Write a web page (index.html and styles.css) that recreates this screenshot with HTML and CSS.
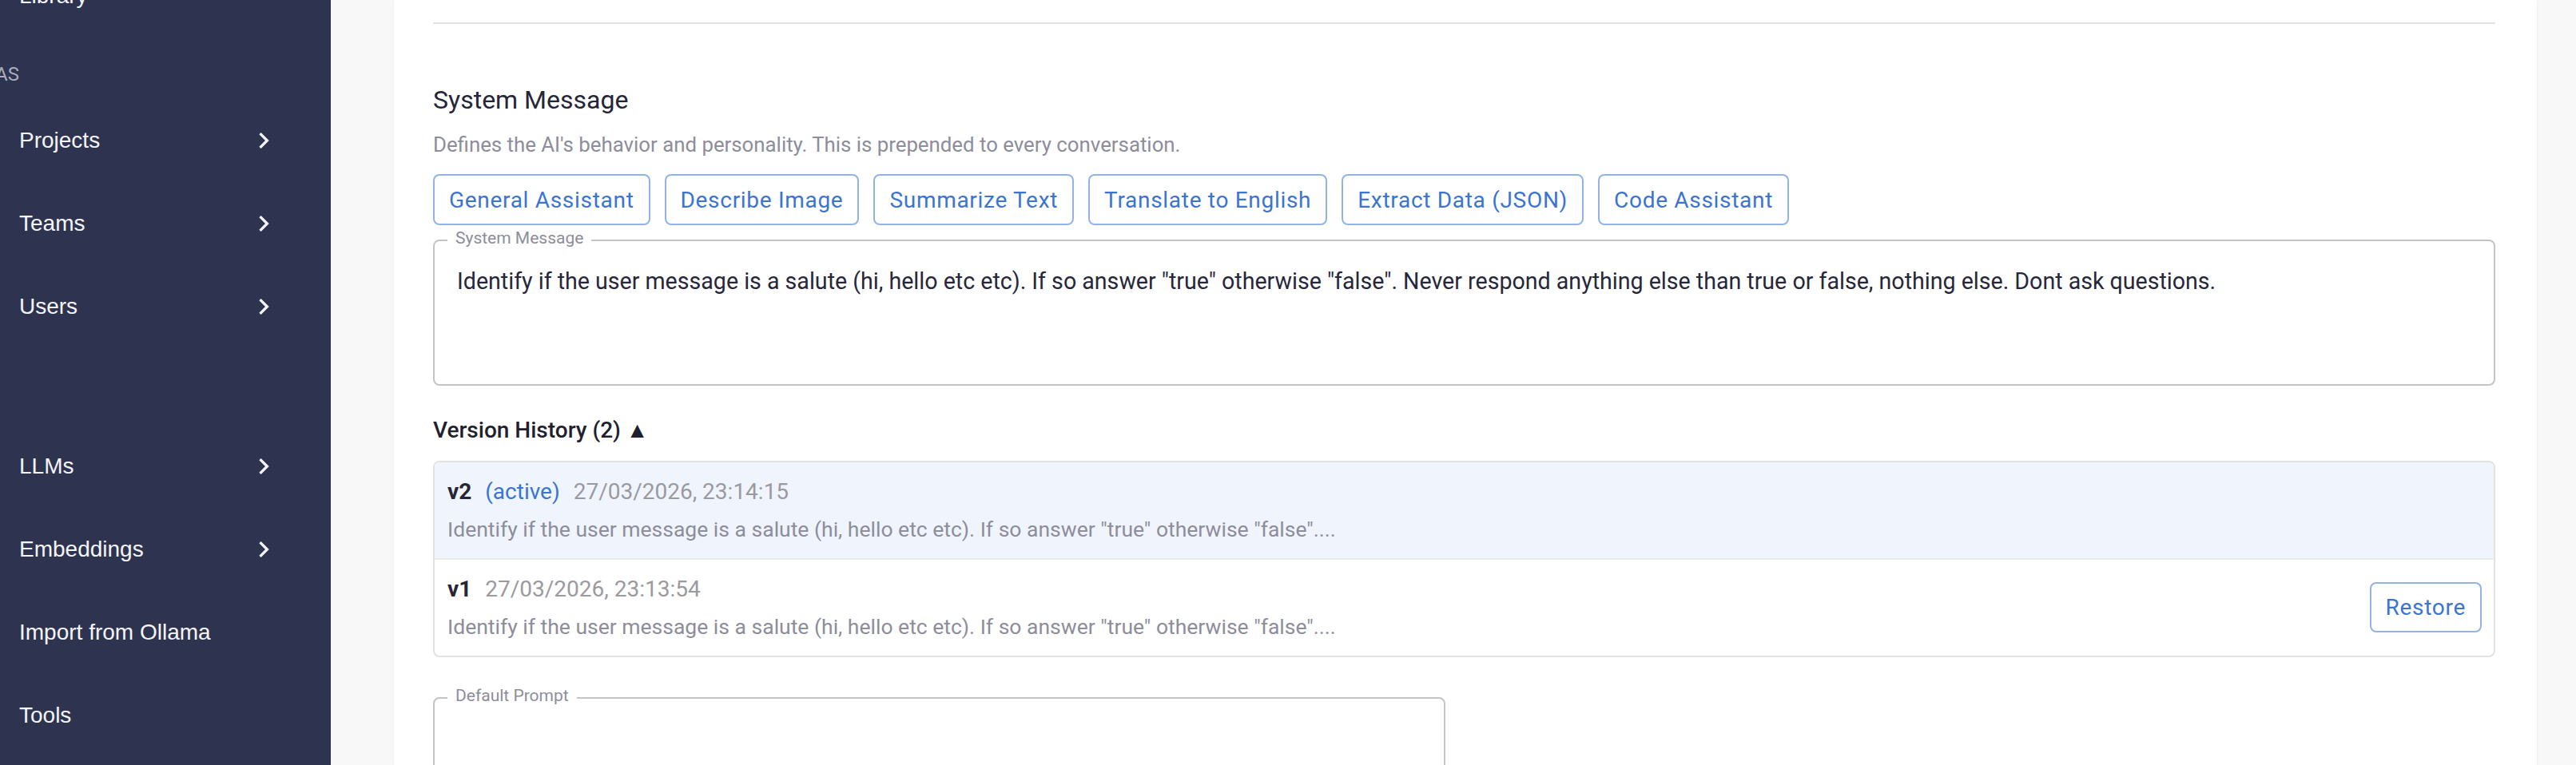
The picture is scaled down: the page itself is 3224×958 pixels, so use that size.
FILE: index.html
```html
<!DOCTYPE html>
<html lang="en">
<head>
    <meta charset="UTF-8">
    <meta name="viewport" content="width=device-width, initial-scale=1.0">
    <title>Assistant Settings</title>
    <link rel="stylesheet" href="styles.css">
</head>
<body>

    <div class="layout">
        <nav class="sidebar">
            <ul class="nav-list">
                <li class="nav-item"><span>Library</span></li>
                <li class="nav-header"><span class="header-text">AS</span></li>
                <li class="nav-item">
                    <span>Projects</span>
                    <svg class="chevron" viewBox="0 0 24 24"><path d="M10 6 8.59 7.41 13.17 12l-4.58 4.59L10 18l6-6z"/></svg>
                </li>
                <li class="nav-item">
                    <span>Teams</span>
                    <svg class="chevron" viewBox="0 0 24 24"><path d="M10 6 8.59 7.41 13.17 12l-4.58 4.59L10 18l6-6z"/></svg>
                </li>
                <li class="nav-item">
                    <span>Users</span>
                    <svg class="chevron" viewBox="0 0 24 24"><path d="M10 6 8.59 7.41 13.17 12l-4.58 4.59L10 18l6-6z"/></svg>
                </li>
                <li class="nav-spacer"></li>
                <li class="nav-item">
                    <span>LLMs</span>
                    <svg class="chevron" viewBox="0 0 24 24"><path d="M10 6 8.59 7.41 13.17 12l-4.58 4.59L10 18l6-6z"/></svg>
                </li>
                <li class="nav-item">
                    <span>Embeddings</span>
                    <svg class="chevron" viewBox="0 0 24 24"><path d="M10 6 8.59 7.41 13.17 12l-4.58 4.59L10 18l6-6z"/></svg>
                </li>
                <li class="nav-item"><span>Import from Ollama</span></li>
                <li class="nav-item"><span>Tools</span></li>
            </ul>
        </nav>

        <main class="main">
            <div class="card">
                <hr class="divider">

                <h2 class="section-title">System Message</h2>
                <p class="section-desc">Defines the AI's behavior and personality. This is prepended to every conversation.</p>

                <div class="presets">
                    <button class="btn">General Assistant</button>
                    <button class="btn">Describe Image</button>
                    <button class="btn">Summarize Text</button>
                    <button class="btn">Translate to English</button>
                    <button class="btn">Extract Data (JSON)</button>
                    <button class="btn">Code Assistant</button>
                </div>

                <div class="field">
                    <label class="field-label">System Message</label>
                    <div class="field-text">Identify if the user message is a salute (hi, hello etc etc). If so answer "true" otherwise "false". Never respond anything else than true or false, nothing else. Dont ask questions.</div>
                </div>

                <div class="history-title">Version History (2) ▲</div>

                <div class="history">
                    <div class="version active">
                        <div class="version-info">
                            <div class="version-line">
                                <span class="version-num">v2</span>
                                <span class="version-active">(active)</span>
                                <span class="version-date">27/03/2026, 23:14:15</span>
                            </div>
                            <div class="version-preview">Identify if the user message is a salute (hi, hello etc etc). If so answer "true" otherwise "false"....</div>
                        </div>
                    </div>
                    <div class="version">
                        <div class="version-info">
                            <div class="version-line">
                                <span class="version-num">v1</span>
                                <span class="version-date">27/03/2026, 23:13:54</span>
                            </div>
                            <div class="version-preview">Identify if the user message is a salute (hi, hello etc etc). If so answer "true" otherwise "false"....</div>
                        </div>
                        <button class="btn btn-restore">Restore</button>
                    </div>
                </div>

                <div class="field field-prompt">
                    <label class="field-label">Default Prompt</label>
                    <div class="field-text"></div>
                </div>
            </div>
        </main>
    </div>

</body>
</html>
```

FILE: styles.css
```css
body {
    margin: 0;
    height: 958px;
    overflow: hidden;
    font-family: Roboto, "Liberation Sans", sans-serif;
    background: #f8f8f8;
}

.layout {
    display: flex;
    height: 958px;
}

/* Barre laterale */
.sidebar {
    width: 414px;
    flex-shrink: 0;
    background: #2e3350;
    overflow: hidden;
}

.nav-list {
    list-style: none;
    margin: -57px 0 0 0;
    padding: 0;
}

.nav-item {
    height: 104px;
    display: flex;
    align-items: center;
    justify-content: space-between;
    padding: 0 64px 0 24px;
    font-family: "Liberation Sans", Arial, sans-serif;
    font-size: 28px;
    color: #f4f5f8;
}

.chevron {
    width: 40px;
    height: 40px;
    fill: #f4f5f8;
}

.nav-header {
    height: 77px;
    box-sizing: border-box;
    padding-top: 32px;
    font-size: 24px;
    line-height: 28px;
    color: #a9adbe;
}

.header-text {
    margin-left: -6px;
}

.nav-spacer {
    height: 96px;
}

/* Zone principale */
.main {
    flex: 1;
    padding: 0 49px 0 79px;
    overflow: hidden;
}

.card {
    background: #fff;
    height: 100%;
    padding: 0 52px 0 49px;
    box-shadow: 0 1px 4px rgba(0, 0, 0, 0.06);
}

.divider {
    margin: 0;
    padding-top: 28px;
    border: none;
    border-bottom: 2px solid #e2e2e2;
}

.section-title {
    margin: 71px 0 0 0;
    font-size: 32px;
    line-height: 48px;
    font-weight: 400;
    color: #25253a;
}

.section-desc {
    margin: 14px 0 0 0;
    font-size: 25.8px;
    line-height: 36px;
    color: #8d8d9b;
}

.presets {
    display: flex;
    gap: 18px;
    margin-top: 19px;
}

.btn {
    height: 64px;
    padding: 0 18px;
    background: #fff;
    border: 2px solid rgba(59, 116, 209, 0.55);
    border-radius: 8px;
    font-family: Roboto, sans-serif;
    font-size: 28px;
    font-weight: 400;
    letter-spacing: 0.025em;
    color: #3b74d1;
    cursor: pointer;
}

.field {
    position: relative;
    margin-top: 18px;
    height: 183px;
    box-sizing: border-box;
    border: 2px solid #c4c4c4;
    border-radius: 8px;
    padding: 32px 28px;
}

.field-label {
    position: absolute;
    top: -16px;
    left: 16px;
    padding: 0 10px;
    background: #fff;
    font-size: 21px;
    line-height: 24px;
    color: #8d8d9b;
}

.field-text {
    font-size: 28.6px;
    line-height: 37.4px;
    color: #27273b;
}

.history-title {
    margin-top: 35px;
    font-size: 28px;
    line-height: 42px;
    font-weight: 500;
    color: #1f1f2f;
}

.history {
    margin-top: 17px;
    border: 2px solid #e2e2e2;
    border-radius: 8px;
    overflow: hidden;
}

.version {
    display: flex;
    align-items: center;
    justify-content: space-between;
    padding: 16px 15px 18px 16px;
}

.version.active {
    background: #f0f5fd;
    border-bottom: 2px solid #ececec;
}

.version-line {
    display: flex;
    gap: 17px;
    font-size: 28px;
    line-height: 42px;
}

.version-num {
    font-weight: 700;
    color: #262636;
}

.version-active {
    color: #3b74d1;
}

.version-date {
    color: #9a9a9f;
}

.version-preview {
    margin-top: 8px;
    font-size: 26.5px;
    line-height: 36px;
    color: #8d8d9b;
}

.btn-restore {
    height: 63px;
}

.field-prompt {
    width: 1267px;
    margin-top: 50px;
}
```
